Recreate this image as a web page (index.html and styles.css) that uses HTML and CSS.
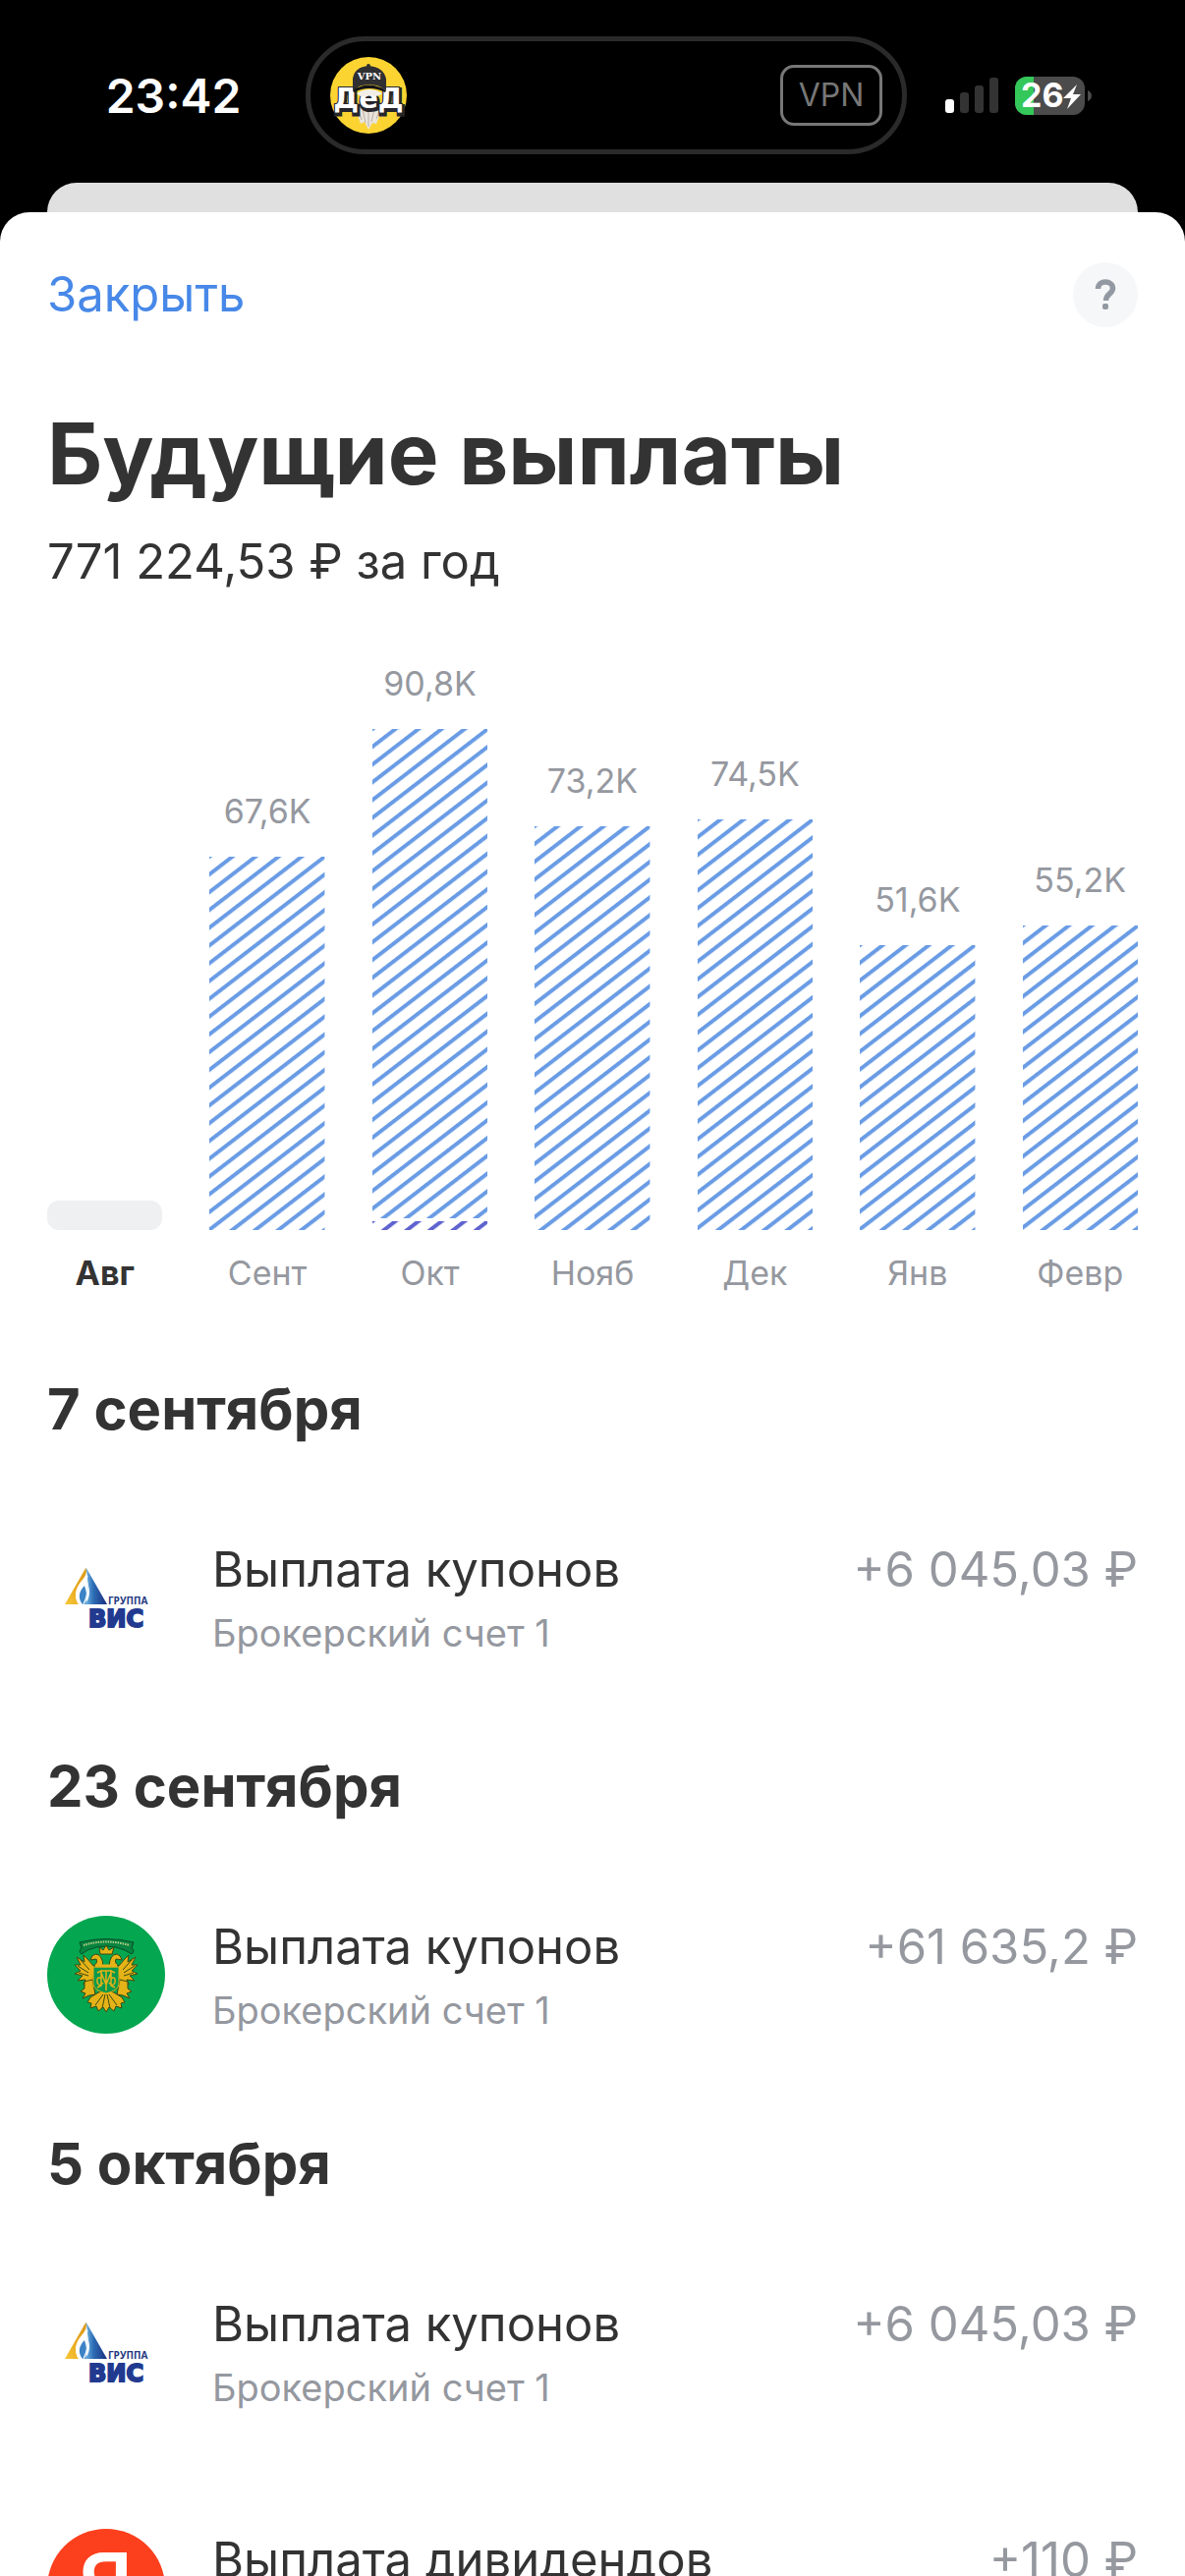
FILE: index.html
```html
<!DOCTYPE html>
<html lang="ru">
<head>
  <meta charset="UTF-8">
  <meta name="viewport" content="width=device-width, initial-scale=1.0">
  <title>Будущие выплаты</title>
  <link rel="stylesheet" href="styles.css">
</head>
<body>
  <!-- shared drawings -->
  <svg class="defs" aria-hidden="true">
    <defs>
      <pattern id="hatch-blue" patternUnits="userSpaceOnUse" y="-2" width="200" height="14.33" patternTransform="rotate(-37.6)">
        <rect width="200" height="4" fill="#6a9ce5"/>
      </pattern>
      <pattern id="hatch-violet" patternUnits="userSpaceOnUse" y="-2" width="200" height="14.33" patternTransform="rotate(-37.6)">
        <rect width="200" height="4" fill="#5f63cf"/>
      </pattern>
      <linearGradient id="vis-gold" x1="0" y1="1" x2="1" y2="0">
        <stop offset="0" stop-color="#f7c93a"/>
        <stop offset="0.5" stop-color="#e9a820"/>
        <stop offset="1" stop-color="#d89a1c"/>
      </linearGradient>
      <linearGradient id="vis-blue" x1="0" y1="0" x2="1" y2="0">
        <stop offset="0" stop-color="#7cc0ea"/>
        <stop offset="0.4" stop-color="#2c6cb4"/>
        <stop offset="1" stop-color="#1c2f80"/>
      </linearGradient>
      <symbol id="vis" viewBox="0 0 120 120">
        <path d="M39.5 29.5L18 67H32C27 59 29 51 34 45C38 40 41 36 39.5 29.5Z" fill="url(#vis-gold)"/>
        <path d="M39.5 29.5L61 67H38C43 62 44 55 42 48C41 43 41 37 39.5 29.5Z" fill="url(#vis-blue)"/>
        <path d="M38 48C32 54 31 61 36 67H39C41 60 40 54 38 48Z" fill="#3c83c6"/>
        <path d="M41 38C32 47 26 56 33 67" fill="none" stroke="#fff" stroke-width="2"/>
        <path d="M40.5 44C42 53 41 60 37 67" fill="none" stroke="#e8f4fb" stroke-width="1.5"/>
        <text x="62" y="67" class="vis-small">ГРУППА</text>
        <text x="42" y="90" class="vis-big">ВИС</text>
      </symbol>
    </defs>
  </svg>

  <div class="screen">
    <div class="status-bar">
      <div class="clock">23:42</div>
      <div class="island">
        <svg class="app-icon" viewBox="0 0 78 78" aria-hidden="true">
          <circle cx="39" cy="39" r="39" fill="#fbd432"/>
          <path d="M20 49L25 61L28 59L31 68L35 66L39 74L43 67L47 68L50 60L54 61L60 48Z" fill="#e9e4dc"/>
          <path d="M28 52L32 64M33 53L36 67M39 54V71M45 53L42 66M51 52L47 63" stroke="#b9b1a7" stroke-width="1" fill="none"/>
          <text x="40" y="54" class="ded-shadow">ДеД</text>
          <text x="39" y="52" class="ded">ДеД</text>
          <path d="M27 37Q40 29 53 37Q48 42 40 39Q33 43 27 37Z" fill="#f1eeea"/>
          <path d="M23 34V22Q25 10 39 9Q54 10 57 22V34Q49 28 40 28Q30 28 23 34Z" fill="#303032"/>
          <path d="M23 34Q39 23 57 34L56 36Q40 28 24 36Z" fill="#151516"/>
          <circle cx="39" cy="9" r="2" fill="#303032"/>
          <text x="40" y="23" class="cap-text">VPN</text>
        </svg>
        <span class="vpn">VPN</span>
      </div>
      <div class="indicators">
        <svg class="signal" viewBox="0 0 56 36" aria-hidden="true">
          <rect x="1" y="22" width="9" height="14" rx="3" fill="#fff"/>
          <rect x="16" y="15" width="9" height="21" rx="3" fill="#333"/>
          <rect x="31" y="8" width="9" height="28" rx="3" fill="#333"/>
          <rect x="46" y="0" width="9" height="36" rx="3" fill="#333"/>
        </svg>
        <svg class="battery" viewBox="0 0 79 39" aria-hidden="true">
          <rect width="71" height="39" rx="12" fill="#4b4b4b"/>
          <path d="M12 0H19V39H12A12 12 0 0 1 0 27V12A12 12 0 0 1 12 0Z" fill="#34c759"/>
          <path d="M74 14Q78 16 78 19.5Q78 23 74 25Z" fill="#4b4b4b"/>
          <text x="6" y="31" class="battery-text">26</text>
          <path d="M63 8L49 22H57L53 33L67 18H59Z" fill="#fff"/>
        </svg>
      </div>
    </div>

    <div class="back-sheet"></div>

    <main class="sheet">
      <div class="nav">
        <button class="close-button" type="button">Закрыть</button>
        <button class="help-button" type="button" aria-label="Справка">
          <svg viewBox="0 0 66 66" aria-hidden="true">
            <path d="M25.5 27C25.5 17.5 40.5 18 40.5 26.5C40.5 32 33.5 32 33.5 39" fill="none" stroke="#9299a2" stroke-width="5.5"/>
            <rect x="30" y="42" width="6" height="6" rx="2" fill="#9299a2"/>
          </svg>
        </button>
      </div>

      <h1 class="title">Будущие выплаты</h1>
      <p class="total">771 224,53 ₽ за год</p>

      <div class="chart">
        <div class="column">
          <div class="plot"><div class="bar-empty"></div></div>
          <div class="month month-active">Авг</div>
        </div>
        <div class="column">
          <div class="plot">
            <div class="value">67,6K</div>
            <svg class="bar" style="height: 380px"><rect width="100%" height="100%" fill="url(#hatch-blue)"/></svg>
          </div>
          <div class="month">Сент</div>
        </div>
        <div class="column">
          <div class="plot">
            <div class="value">90,8K</div>
            <svg class="bar" style="height: 498px"><rect width="100%" height="100%" fill="url(#hatch-blue)"/></svg>
            <svg class="bar bar-second" style="height: 9px"><rect width="100%" height="100%" fill="url(#hatch-violet)"/></svg>
          </div>
          <div class="month">Окт</div>
        </div>
        <div class="column">
          <div class="plot">
            <div class="value">73,2K</div>
            <svg class="bar" style="height: 411px"><rect width="100%" height="100%" fill="url(#hatch-blue)"/></svg>
          </div>
          <div class="month">Нояб</div>
        </div>
        <div class="column">
          <div class="plot">
            <div class="value">74,5K</div>
            <svg class="bar" style="height: 418px"><rect width="100%" height="100%" fill="url(#hatch-blue)"/></svg>
          </div>
          <div class="month">Дек</div>
        </div>
        <div class="column">
          <div class="plot">
            <div class="value">51,6K</div>
            <svg class="bar" style="height: 290px"><rect width="100%" height="100%" fill="url(#hatch-blue)"/></svg>
          </div>
          <div class="month">Янв</div>
        </div>
        <div class="column">
          <div class="plot">
            <div class="value">55,2K</div>
            <svg class="bar" style="height: 310px"><rect width="100%" height="100%" fill="url(#hatch-blue)"/></svg>
          </div>
          <div class="month">Февр</div>
        </div>
      </div>

      <section>
        <h2 class="date">7 сентября</h2>
        <div class="row">
          <svg class="logo" aria-hidden="true"><use href="#vis"/></svg>
          <div class="info">
            <div class="name">Выплата купонов</div>
            <div class="account">Брокерский счет 1</div>
          </div>
          <div class="amount">+6 045,03 ₽</div>
        </div>
      </section>

      <section>
        <h2 class="date">23 сентября</h2>
        <div class="row">
          <svg class="logo" viewBox="0 0 120 120" aria-hidden="true">
            <circle cx="60" cy="60" r="60" fill="#05a650"/>
            <g stroke="#3d4a12" stroke-width="1" stroke-linejoin="round" fill="#e5b318">
              <!-- ribbon -->
              <path d="M33 27Q60 20 88 27L86 33Q90 35 86 39L79 35Q60 27 41 35L35 39Q31 36 35 33Z" fill="#07843f" stroke="#064f29"/>
              <path d="M37 30Q60 23 84 30" fill="none" stroke="#b9d08a" stroke-width="2" stroke-dasharray="1.5 1"/>
              <!-- crown and heads -->
              <path d="M54 39L53 32L57 35L60 30L63 35L68 32L66 39Z"/>
              <path d="M57 51Q56 39 49 39Q45 40 44 45L50 44Q52 48 47 51Z"/>
              <path d="M63 51Q64 39 71 39Q75 40 76 45L70 44Q68 48 73 51Z"/>
              <!-- wings -->
              <path d="M48 52L41 44L37 40L38 47L30 42L34 50L28 50L34 56L28 59L36 61L31 66L39 65L37 70L47 66Z"/>
              <path d="M72 52L79 44L83 40L82 47L90 42L86 50L92 50L86 56L92 59L84 61L89 66L81 65L83 70L73 66Z"/>
              <path d="M34 45L43 55M31 51L42 58M32 58L42 61M86 45L77 55M89 51L78 58M88 58L78 61" fill="none"/>
              <!-- legs -->
              <path d="M46 65L38 67L38 74L34 77L39 79L36 84L43 81L49 80Z"/>
              <path d="M74 65L82 67L82 74L86 77L81 79L84 84L77 81L71 80Z"/>
              <!-- tail -->
              <path d="M54 77L44 83L41 88L45 89L44 94L50 92L52 97L57 93L60 98L63 93L68 97L70 92L76 94L75 89L79 88L76 83L66 77Z"/>
              <path d="M57 80L49 91M59 80L56 94M61 80L64 94M63 80L71 91" fill="none"/>
              <!-- shield -->
              <path d="M47 52H73V70Q72 76 60 79Q48 76 47 70Z" fill="#08994b" stroke="#e5b318"/>
            </g>
            <path d="M49 51H71" stroke="#e5b318" stroke-width="3"/>
            <path d="M51 58L55 56V71L51 73M69 58L65 56V71L69 73M55 58L60 70L65 58M60 56V76M54 56H66M55 64Q50 61 51 68Q53 73 57 68M65 64Q70 61 69 68Q67 73 63 68" fill="none" stroke="#e5b318" stroke-width="1.5"/>
          </svg>
          <div class="info">
            <div class="name">Выплата купонов</div>
            <div class="account">Брокерский счет 1</div>
          </div>
          <div class="amount">+61 635,2 ₽</div>
        </div>
      </section>

      <section>
        <h2 class="date">5 октября</h2>
        <div class="row">
          <svg class="logo" aria-hidden="true"><use href="#vis"/></svg>
          <div class="info">
            <div class="name">Выплата купонов</div>
            <div class="account">Брокерский счет 1</div>
          </div>
          <div class="amount">+6 045,03 ₽</div>
        </div>
        <div class="row">
          <svg class="logo" viewBox="0 0 120 120" aria-hidden="true">
            <circle cx="60" cy="60" r="60" fill="#fc3f1d"/>
            <text x="87" y="85" class="ya">Я</text>
          </svg>
          <div class="info">
            <div class="name">Выплата дивидендов</div>
          </div>
          <div class="amount">+110 ₽</div>
        </div>
      </section>
    </main>
  </div>
</body>
</html>
```
FILE: styles.css
```css
* {
  box-sizing: border-box;
}

body {
  margin: 0;
  background-color: #000;
  color: #333;
  font-family: Inter, "Liberation Sans", sans-serif;
}

h1, h2, p {
  margin: 0;
}

button {
  padding: 0;
  border: none;
  background: none;
  font-family: inherit;
  cursor: pointer;
}

.defs {
  position: absolute;
  width: 0;
  height: 0;
}

.screen {
  display: flex;
  flex-direction: column;
  height: 100vh;
  overflow: hidden;
}

/* status bar */
.status-bar {
  display: grid;
  grid-template-columns: 1fr 612px 1fr;
  flex-shrink: 0;
  align-items: center;
  height: 186px;
  padding: 8px 0 0 28px;
}

.clock {
  padding-left: 14px;
  color: #fff;
  font-size: 48px;
  font-weight: 600;
  text-align: center;
}

.island {
  display: flex;
  align-items: center;
  justify-content: space-between;
  height: 120px;
  padding: 0 20px;
  border: 5px solid #2a2a2a;
  border-radius: 60px;
}

.app-icon {
  width: 78px;
  height: 78px;
}

.ded,
.ded-shadow {
  fill: #fff;
  stroke: #26262a;
  stroke-width: 2px;
  paint-order: stroke;
  font-family: "DejaVu Sans", sans-serif;
  font-size: 29px;
  font-weight: bold;
  text-anchor: middle;
}

.ded-shadow {
  fill: #26262a;
  stroke-width: 4px;
}

.cap-text {
  fill: #fff;
  font-family: "DejaVu Serif", serif;
  font-size: 10px;
  font-weight: bold;
  text-anchor: middle;
}

.vpn {
  width: 104px;
  border: 3px solid #777;
  border-radius: 14px;
  color: #777;
  font-size: 32px;
  line-height: 56px;
  text-align: center;
}

.indicators {
  display: flex;
  align-items: center;
  gap: 16px;
  padding-left: 38px;
}

.signal {
  width: 56px;
  height: 36px;
}

.battery {
  width: 79px;
  height: 39px;
}

.battery-text {
  fill: #fff;
  font-size: 34px;
  font-weight: 700;
}

/* card that stays behind the open sheet */
.back-sheet {
  flex-shrink: 0;
  height: 30px;
  margin: 0 48px;
  border-radius: 30px 30px 0 0;
  background-color: #e0e0e0;
}

.sheet {
  flex: 1;
  min-height: 0;
  padding: 0 48px;
  border-radius: 30px 30px 0 0;
  background-color: #fff;
  overflow: hidden;
}

.nav {
  display: flex;
  align-items: center;
  justify-content: space-between;
  height: 168px;
}

.close-button {
  color: #4788e8;
  font-size: 49px;
  line-height: 64px;
}

.help-button {
  width: 66px;
  height: 66px;
  border-radius: 50%;
  background-color: #f6f7f8;
}

.help-button svg {
  display: block;
}

.title {
  padding-top: 28px;
  font-size: 87px;
  font-weight: 700;
  line-height: 100px;
}

.total {
  margin-top: 28px;
  font-size: 49px;
  line-height: 64px;
}

/* chart */
.chart {
  display: flex;
  gap: 48px;
  margin: 72px 0 42px;
}

.column {
  flex: 1;
  min-width: 0;
}

.plot {
  display: flex;
  flex-direction: column;
  justify-content: flex-end;
  height: 576px;
}

.value,
.month {
  color: #95989f;
  font-size: 34px;
  text-align: center;
  white-space: nowrap;
}

.value {
  margin-bottom: 26px;
  line-height: 40px;
}

.month {
  margin-top: 20px;
  line-height: 48px;
}

.month-active {
  color: #333;
  font-weight: 700;
}

.bar {
  display: block;
  flex-shrink: 0;
  width: 100%;
}

.bar-second {
  margin-top: 3px;
}

.bar-empty {
  height: 30px;
  border-radius: 12px;
  background-color: #eef0f2;
}

/* list of payments */
.date {
  font-size: 58px;
  font-weight: 700;
  line-height: 144px;
}

.row {
  display: flex;
  align-items: flex-start;
  padding: 60px 0 52px;
}

.logo {
  flex-shrink: 0;
  width: 120px;
  height: 120px;
  margin-right: 48px;
}

.info {
  flex: 1;
  min-height: 128px;
}

.name,
.amount {
  font-size: 49px;
  line-height: 64px;
}

.account {
  color: #95989f;
  font-size: 38px;
  line-height: 64px;
}

.amount {
  color: #95989f;
}

.vis-small {
  fill: #24377f;
  font-family: "Open Sans", sans-serif;
  font-size: 10px;
  font-weight: 700;
}

.vis-big {
  fill: #213a90;
  stroke: #213a90;
  stroke-width: 2px;
  font-family: "DejaVu Sans", sans-serif;
  font-size: 24px;
  font-weight: bold;
}

.ya {
  fill: #fff;
  font-size: 84px;
  font-weight: 600;
  text-anchor: end;
}
```
